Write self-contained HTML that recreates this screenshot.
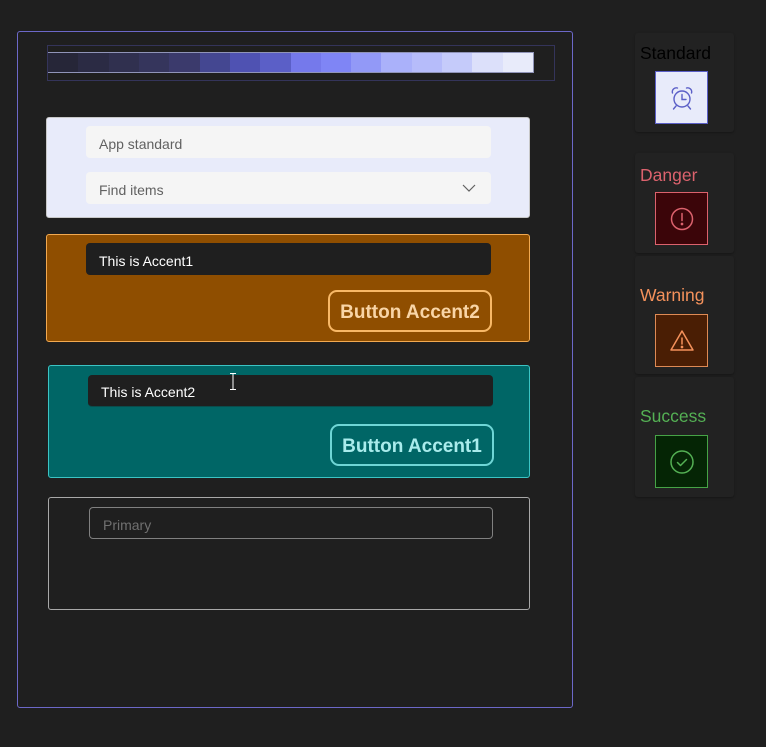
<!DOCTYPE html>
<html><head><meta charset="utf-8"><style>
*{box-sizing:border-box;margin:0;padding:0}
body{width:766px;height:747px;background:#1f1f1f;position:relative;overflow:hidden;font-family:"Segoe UI","Liberation Sans",sans-serif}
.a{position:absolute}
.in{position:absolute;border-radius:4px;font-size:14px;padding-left:13px;padding-top:3px;display:flex;align-items:center}
.btn{position:absolute;border-radius:9px;border:2px solid;font-weight:bold;font-size:19px;padding-top:4px;display:flex;align-items:center;justify-content:center}
.rc{position:absolute;left:635px;width:99px;background:#222222;border-radius:3px;box-shadow:0 1px 2px rgba(0,0,0,.3)}
.lab{position:absolute;left:5px;top:10px;font-size:17.5px}
.ib{position:absolute;left:20px;width:53px;height:53px;border:1px solid;display:flex;align-items:center;justify-content:center}
</style></head><body>
<div class="a" style="left:17px;top:31px;width:556px;height:677px;border:1px solid #6c68c8;border-radius:3px"></div>
<div class="a" style="left:47px;top:45px;width:508px;height:36px;border:1px solid #34345a"></div>
<div class="a" style="left:48px;top:52px;height:21px;display:flex;width:486px;border:1px solid #9094b8;border-left:none;">
<div style="flex:1;background:#262638"></div><div style="flex:1;background:#2b2b44"></div><div style="flex:1;background:#30304f"></div><div style="flex:1;background:#35355c"></div><div style="flex:1;background:#3b3a6c"></div><div style="flex:1;background:#444791"></div><div style="flex:1;background:#4f52b2"></div><div style="flex:1;background:#5b5fc7"></div><div style="flex:1;background:#7579eb"></div><div style="flex:1;background:#7f85f5"></div><div style="flex:1;background:#9299f7"></div><div style="flex:1;background:#aab1fa"></div><div style="flex:1;background:#b6bcfa"></div><div style="flex:1;background:#c5cbfa"></div><div style="flex:1;background:#dce0fa"></div><div style="flex:1;background:#e8ebfa"></div></div>

<div class="a" style="left:46px;top:117px;width:484px;height:101px;background:#e8ebfa;border:1px solid #c8c8c8;border-radius:3px"></div>
<div class="in" style="left:86px;top:126px;width:405px;height:32px;background:#f5f5f5;color:#616161">App standard</div>
<div class="in" style="left:86px;top:172px;width:405px;height:32px;background:#f5f5f5;color:#616161">Find items
<svg class="a" style="left:376px;top:11px" width="14" height="10" viewBox="0 0 14 10"><path d="M1 2l6 6 6-6" fill="none" stroke="#616161" stroke-width="1.2"/></svg></div>

<div class="a" style="left:46px;top:234px;width:484px;height:108px;background:#8f4e00;border:1px solid #f2a950;border-radius:3px"></div>
<div class="in" style="left:86px;top:243px;width:405px;height:32px;background:#1f1f1f;color:#fff">This is Accent1</div>
<div class="btn" style="left:328px;top:290px;width:164px;height:42px;border-color:#f8b867;color:#f9d5a6">Button Accent2</div>

<div class="a" style="left:48px;top:365px;width:482px;height:113px;background:#006666;border:1px solid #3bc4c4;border-radius:3px"></div>
<div class="in" style="left:88px;top:375px;width:405px;height:32px;background:#1f1f1f;color:#fff;border-bottom:1px solid #0b4c4c">This is Accent2</div>
<svg class="a" style="left:229px;top:373px" width="8" height="17" viewBox="0 0 8 17"><path d="M1 .5h6M4 .5v16M1 16.5h6" stroke="#fff" stroke-width="1"/></svg>
<div class="btn" style="left:330px;top:424px;width:164px;height:42px;border-color:#6fd6d6;color:#a9ecec">Button Accent1</div>

<div class="a" style="left:48px;top:497px;width:482px;height:113px;border:1px solid #a8a8a8;border-radius:3px"></div>
<div class="in" style="left:89px;top:507px;width:404px;height:32px;border:1px solid #808080;color:#707070">Primary</div>

<div class="rc" style="top:33px;height:99px"><div class="lab" style="color:#000">Standard</div>
<div class="ib" style="top:38px;background:#e8ebfa;border-color:#5b5fc7"><svg width="28" height="28" viewBox="0 0 28 28" fill="none" stroke="#5b5fc7" stroke-width="1.4" stroke-linecap="round"><circle cx="14" cy="15" r="8"/><path d="M14 10.5v5h4"/><path d="M4.5 9a4 4 0 0 1 5-5M23.5 9a4 4 0 0 0-5-5M8 22l-2.5 3M20 22l2.5 3"/></svg></div></div>

<div class="rc" style="top:153px;height:100px"><div class="lab" style="top:12px;color:#dc626d">Danger</div>
<div class="ib" style="top:39px;background:#3b0509;border-color:#dc626d"><svg width="28" height="28" viewBox="0 0 28 28" fill="none" stroke="#dc626d" stroke-width="1.5" stroke-linecap="round"><circle cx="14" cy="14" r="10.5"/><path d="M14 8.5v7"/><circle cx="14" cy="19" r=".6" fill="#dc626d"/></svg></div></div>

<div class="rc" style="top:256px;height:118px"><div class="lab" style="top:29px;color:#f4915b">Warning</div>
<div class="ib" style="top:58px;background:#4a1e04;border-color:#de8a55"><svg width="28" height="28" viewBox="0 0 28 28" fill="none" stroke="#f4915b" stroke-width="1.5" stroke-linejoin="round" stroke-linecap="round"><path d="M14 4L25 23H3z"/><path d="M14 11v6"/><circle cx="14" cy="20" r=".6" fill="#f4915b"/></svg></div></div>

<div class="rc" style="top:377px;height:120px"><div class="lab" style="top:29px;color:#54b054">Success</div>
<div class="ib" style="top:58px;background:#052505;border-color:#46a346"><svg width="28" height="28" viewBox="0 0 28 28" fill="none" stroke="#54b054" stroke-width="1.5" stroke-linecap="round" stroke-linejoin="round"><circle cx="14" cy="14" r="11"/><path d="M9.5 14.5l3 3 6-6"/></svg></div></div>
</body></html>
